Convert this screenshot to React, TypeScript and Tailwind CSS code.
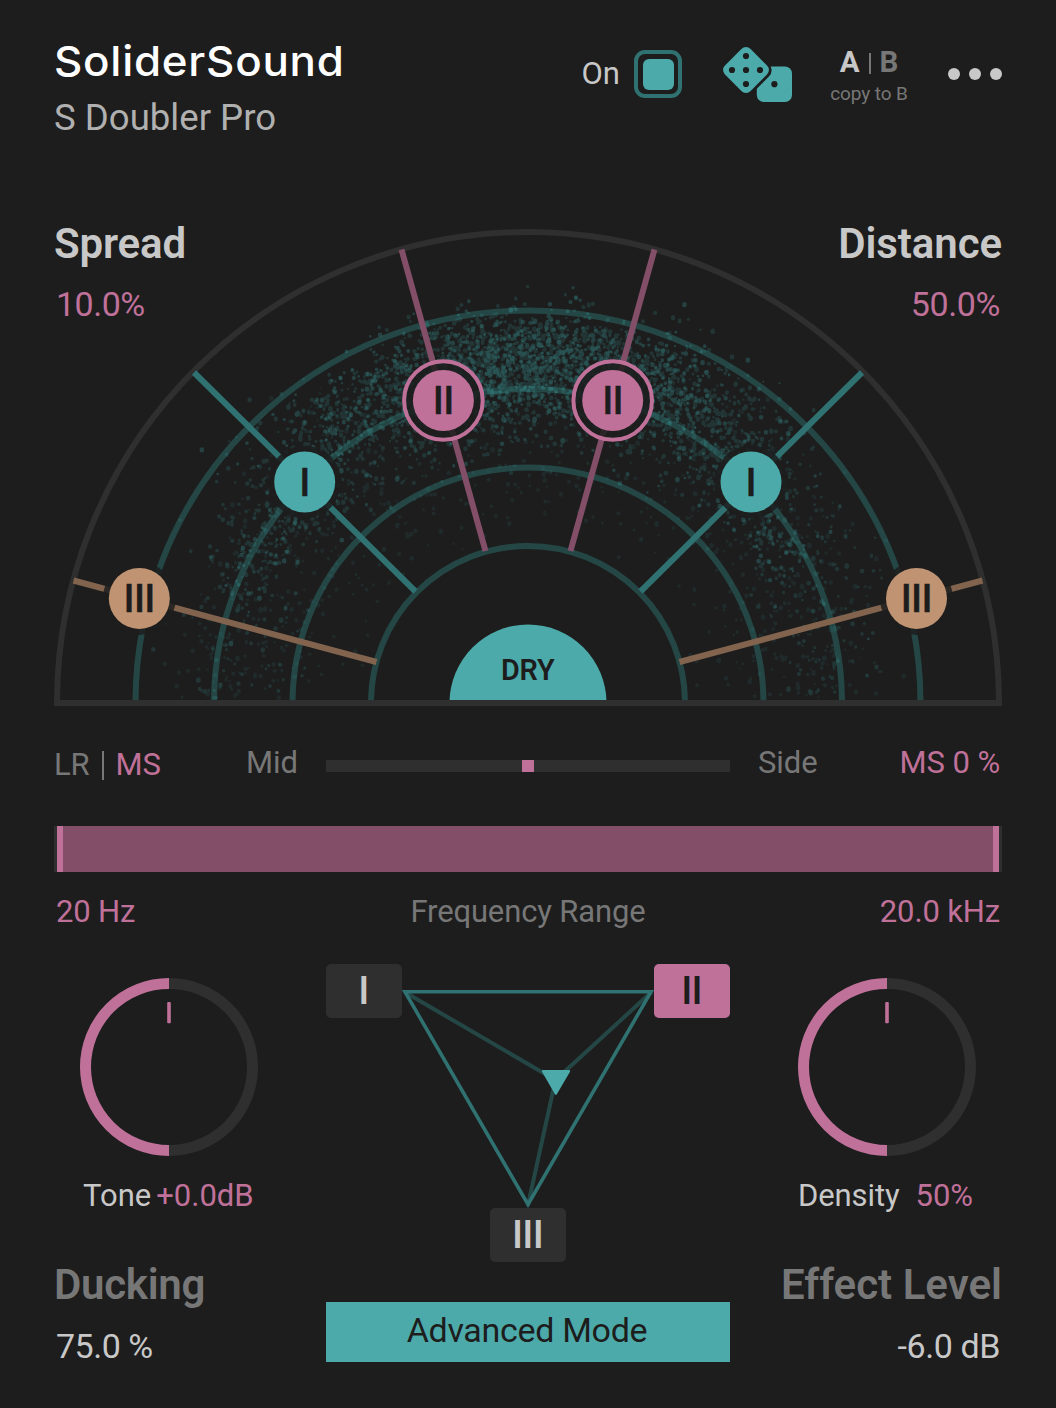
import React from "react";

const TEAL = "#4cabaa";
const PINK = "#c0719a";
const TAN = "#c09472";
const BG = "#1d1d1d";

const CX = 474;
const CY = 475;

function makeRandom(seed: number) {
  let s = seed;
  return () => {
    s = (s + 0x6d2b79f5) | 0;
    let t = Math.imul(s ^ (s >>> 15), 1 | s);
    t = (t + Math.imul(t ^ (t >>> 7), 61 | t)) ^ t;
    return ((t ^ (t >>> 14)) >>> 0) / 4294967296;
  };
}

type Tier = { opacity: number; d: string };

/** Scatter of reverberation grains, densest straight ahead of the listener. */
function buildParticles(): Tier[] {
  const rnd = makeRandom(77);
  const gauss = () => (rnd() + rnd() + rnd() + rnd() - 2) * 1.6;
  const tiers: Tier[] = [
    { opacity: 0.09, d: "" },
    { opacity: 0.16, d: "" },
    { opacity: 0.25, d: "" },
  ];
  const put = (deg: number, r: number, level: number) => {
    const a = (deg * Math.PI) / 180;
    const x = CX + r * Math.sin(a);
    const y = CY - r * Math.cos(a);
    if (y > 470 || r < 162) return;
    const q = 1.1 + rnd() * 1.3;
    const tier = tiers[Math.min(2, level)];
    tier.d += `M${(x - q).toFixed(1)} ${y.toFixed(1)}a${q.toFixed(1)} ${q.toFixed(1)} 0 1 0 ${(2 * q).toFixed(1)} 0a${q.toFixed(1)} ${q.toFixed(1)} 0 1 0 ${(-2 * q).toFixed(1)} 0`;
  };
  for (let i = 0; i < 1700; i++) put(gauss() * 18, 344 + gauss() * 23, rnd() < 0.45 ? 2 : 1);
  for (let i = 0; i < 2000; i++) put(gauss() * 29, 328 + gauss() * 36, rnd() < 0.3 ? 2 : 1);
  for (let i = 0; i < 800; i++) {
    const side = rnd() < 0.5 ? -1 : 1;
    const deg = 30 + rnd() * 60;
    put(side * deg, 322 - (deg - 35) * 0.5 + gauss() * 33, rnd() < 0.4 ? 1 : 0);
  }
  for (let i = 0; i < 220; i++) {
    const side = rnd() < 0.5 ? -1 : 1;
    put(side * (54 + gauss() * 9), 303 + gauss() * 22, rnd() < 0.4 ? 2 : 1);
  }
  for (let i = 0; i < 550; i++) put((rnd() * 2 - 1) * 85, 260 + gauss() * 50, 0);
  return tiers;
}

const PARTICLES = buildParticles();

function Node({ x, y, color, label, ring }: { x: number; y: number; color: string; label: string; ring?: boolean }) {
  return (
    <g>
      <circle cx={x} cy={y} r={ring ? 37.5 : 36.5} fill={BG} fillOpacity={0.86} />
      {ring && <circle cx={x} cy={y} r={39.3} fill="none" stroke={color} strokeWidth={4} />}
      <circle cx={x} cy={y} r={30.5} fill={color} />
      <text x={x - 0.2} y={y + 13.6} textAnchor="middle" fontSize={39} fontWeight={500} letterSpacing={-0.7} fill={BG} stroke={BG} strokeWidth={0.3}>
        {label}
      </text>
    </g>
  );
}

function Stage() {
  return (
    <svg width="948" height="478" viewBox="0 0 948 478" className="block font-['Roboto',sans-serif]">
      <clipPath id="floor">
        <rect x="0" y="0" width="948" height="472" />
      </clipPath>
      <g clipPath="url(#floor)">
        <circle cx={CX} cy={CY} r={471} fill="none" stroke="#2f2f2f" strokeWidth={6} />
        {[392.5, 314, 235.5, 157].map((r) => (
          <circle key={r} cx={CX} cy={CY} r={r} fill="none" stroke="#244746" strokeWidth={6} />
        ))}
        {PARTICLES.map((t) => (
          <path key={t.opacity} d={t.d} fill="#3fb0ae" fillOpacity={t.opacity} fillRule="nonzero" />
        ))}
        <circle cx={CX} cy={CY} r={78.5} fill={TEAL} />
      </g>
      <rect x="0" y="472" width="948" height="6" fill="#2f2f2f" />
      <g strokeWidth={6}>
        <path d="M140 144.500L361.500 363.500M808 144.500L586.500 363.500" stroke="#2f7271" />
        <path d="M347.500 21.500L431.500 323M600.500 21.500L516.500 323" stroke="#824e68" />
        <path d="M19.500 352.500L322.500 434M928.500 352.500L625.500 434" stroke="#82644e" />
      </g>
      <Node x={250.7} y={254} color={TEAL} label="I" />
      <Node x={697} y={254} color={TEAL} label="I" />
      <Node x={389.4} y={172.5} color={PINK} label="II" ring />
      <Node x={558.7} y={172.5} color={PINK} label="II" ring />
      <Node x={85.3} y={370.4} color={TAN} label="III" />
      <Node x={862.5} y={370.4} color={TAN} label="III" />
      <text x={CX - 0.3} y={451.5} textAnchor="middle" fontSize={28.8} fontWeight={600} letterSpacing={-0.2} fill={BG}>
        DRY
      </text>
    </svg>
  );
}

function Dice() {
  return (
    <svg width="70" height="56" viewBox="722 46 70 56" className="block">
      <rect x="756.800" y="66.400" width="35.200" height="35.600" rx="7" fill={TEAL} />
      <rect x="727.900" y="51.900" width="36.200" height="36.200" rx="6.500" transform="rotate(45 746 70)" fill={TEAL} stroke={BG} strokeWidth="5.500" />
      <rect x="727.900" y="51.900" width="36.200" height="36.200" rx="6.500" transform="rotate(45 746 70)" fill={TEAL} />
      {[
        [746, 56],
        [732, 70],
        [746, 70],
        [760, 70],
        [746, 84],
        [774.4, 84.2],
      ].map(([x, y]) => (
        <circle key={`${x}-${y}`} cx={x} cy={y} r="3.100" fill={BG} />
      ))}
    </svg>
  );
}

function Knob() {
  return (
    <svg width="178" height="178" viewBox="0 0 178 178" className="block">
      <path d="M89 5.500a83.500 83.500 0 0 1 0 167" fill="none" stroke="#2f2f2f" strokeWidth="11" />
      <path d="M89 5.500a83.500 83.500 0 0 0 0 167" fill="none" stroke={PINK} strokeWidth="11" />
      <rect x="87.200" y="24" width="3.600" height="21.300" rx="1" fill={PINK} />
    </svg>
  );
}

function VoiceButton({ label, active }: { label: string; active?: boolean }) {
  return (
    <button
      className={
        active
          ? "h-[54px] w-[76px] rounded-[5px] bg-[#c0719a] pr-px text-[39px] leading-[54px] font-medium tracking-[-0.7px] text-[#1d1d1d]"
          : "h-[54px] w-[76px] rounded-[5px] bg-[#2f2f2f] pr-px text-[39px] leading-[54px] font-medium tracking-[-0.7px] text-[#c8c8c8]"
      }
    >
      {label}
    </button>
  );
}

function VoiceTriangle() {
  return (
    <svg width="252" height="244" viewBox="402 964 252 244" className="block">
      <path d="M404.500 992L555.500 1080L651.500 992M555.500 1080L528 1205" fill="none" stroke="#244746" strokeWidth="4" />
      <path d="M405 991.800H651L528 1204.500Z" fill="none" stroke="#2f7271" strokeWidth="3.600" />
      <path d="M543 1070H569a1.200 1.200 0 0 1 1 1.800L556.800 1094.300a1.100 1.100 0 0 1-1.800 0L542 1071.800a1.200 1.200 0 0 1 1-1.800Z" fill={TEAL} />
    </svg>
  );
}

export default function App() {
  return (
    <main className="flex h-[1408px] w-[1056px] flex-col overflow-hidden bg-[#1d1d1d] px-[54px] font-['Roboto',sans-serif] whitespace-nowrap text-[#c8c8c8]">
      <header className="flex h-[228px] items-start justify-between pt-9">
        <div>
          <h1 className="w-fit origin-left scale-x-[1.07] font-['Inter',sans-serif] text-[41px] leading-[51px] font-medium tracking-[0.7px] text-white">
            SoliderSound
          </h1>
          <h2 className="mt-[7px] text-[36.6px] leading-[48px] text-[#b0b0b0]">S Doubler Pro</h2>
        </div>
        <div className="flex h-[76px] items-center">
          <span className="-mt-px text-[31px] leading-[36px]">On</span>
          <button className="ml-[14px] flex size-12 items-center justify-center rounded-[11px] border-4 border-[#2f7271]">
            <span className="size-[31px] rounded-[6px] bg-[#4cabaa]" />
          </button>
          <button className="ml-10">
            <Dice />
          </button>
          <div className="mt-[2px] ml-[38px] flex w-[78px] flex-col items-center">
            <div className="flex items-center gap-[9px] text-[29.5px] leading-[30px] font-bold">
              <span>A</span>
              <span className="mt-[3px] h-[21px] w-[2px] bg-[#777777]" />
              <span className="text-[#777777]">B</span>
            </div>
            <div className="mt-[7px] text-[19px] leading-[19px] tracking-[-0.1px] text-[#777777]">copy to B</div>
          </div>
          <button className="ml-10 flex gap-[9px]">
            <span className="size-3 rounded-full bg-[#c8c8c8]" />
            <span className="size-3 rounded-full bg-[#c8c8c8]" />
            <span className="size-3 rounded-full bg-[#c8c8c8]" />
          </button>
        </div>
      </header>

      <section className="grid h-[478px]">
        <div className="[grid-area:1/1]">
          <Stage />
        </div>
        <div className="flex items-start justify-between [grid-area:1/1]">
          <div className="-mt-[9px]">
            <div className="text-[42px] leading-[50px] font-semibold tracking-[-0.15px]">Spread</div>
            <div className="mt-[15px] ml-[2px] text-[34px] leading-[40px] tracking-[-0.5px] text-[#c0719a]">10.0%</div>
          </div>
          <div className="-mt-[9px] text-right">
            <div className="text-[42px] leading-[50px] font-semibold tracking-[-0.1px]">Distance</div>
            <div className="mt-[15px] mr-[2px] text-[34px] leading-[40px] tracking-[-0.4px] text-[#c0719a]">50.0%</div>
          </div>
        </div>
      </section>

      <section className="mt-9 grid h-[42px] grid-cols-[192px_80px_404px_80px_192px] items-center text-[31px] leading-[40px] tracking-[-0.1px] text-[#777777]">
        <div className="flex items-center pt-[3px]">
          LR
          <span className="ml-3 h-[29px] w-[2px] bg-[#777777]" />
          <span className="ml-3 text-[#c0719a]">MS</span>
        </div>
        <div className="-mt-px">Mid</div>
        <div className="mt-1 flex h-3 justify-center bg-[#2f2f2f]">
          <span className="w-3 bg-[#c0719a]" />
        </div>
        <div className="-mt-px pl-7">Side</div>
        <div className="-mt-px pr-[2px] text-right text-[#c0719a]">MS 0 %</div>
      </section>

      <section className="mt-[42px]">
        <div className="h-[46px] bg-[#2f2f2f] px-[3px]">
          <div className="h-full border-x-[6px] border-[#c0719a] bg-[#824e68]" />
        </div>
        <div className="mt-5 grid grid-cols-3 px-[2px] text-[31px] leading-[40px] tracking-[-0.15px] text-[#c0719a]">
          <span>20 Hz</span>
          <span className="text-center text-[#777777]">Frequency Range</span>
          <span className="text-right">20.0 kHz</span>
        </div>
      </section>

      <section className="mt-8 grid grid-cols-[272px_404px_272px]">
        <div className="pt-[14px]">
          <div className="ml-[26px]">
            <Knob />
          </div>
          <div className="mt-5 ml-[29px] flex gap-[5px] text-[31px] leading-[40px]">
            <span>Tone</span>
            <span className="text-[#c0719a]">+0.0dB</span>
          </div>
          <div className="mt-11 text-[42px] leading-[50px] font-semibold tracking-[-0.3px] text-[#777777]">Ducking</div>
          <div className="mt-4 ml-[2px] text-[34px] leading-[40px] tracking-[-0.5px]">75.0 %</div>
        </div>
        <div className="flex flex-col items-center">
          <div className="flex items-start">
            <VoiceButton label="I" />
            <VoiceTriangle />
            <VoiceButton label="II" active />
          </div>
          <VoiceButton label="III" />
          <button className="mt-10 flex h-[60px] w-full justify-center bg-[#4cabaa] pt-px pr-[2px] text-[34px] leading-[54px] tracking-[-0.3px] text-[#1d1d1d]">
            Advanced Mode
          </button>
        </div>
        <div className="pt-[14px]">
          <div className="ml-[68px]">
            <Knob />
          </div>
          <div className="mt-5 ml-[68px] flex gap-4 text-[31px] leading-[40px] tracking-[-0.1px]">
            <span>Density</span>
            <span className="text-[#c0719a]">50%</span>
          </div>
          <div className="mt-11 text-right text-[42px] leading-[50px] font-semibold text-[#777777]">Effect Level</div>
          <div className="mt-4 mr-[2px] text-right text-[34px] leading-[40px] tracking-[-0.4px]">-6.0 dB</div>
        </div>
      </section>
    </main>
  );
}
